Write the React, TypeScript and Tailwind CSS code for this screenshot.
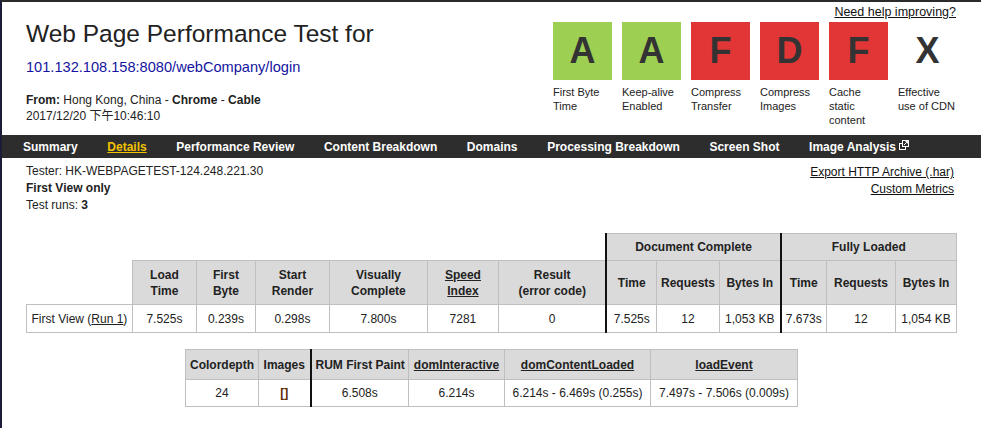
import React from 'react';

const grades = [
  { letter: 'A', bg: 'bg-[#9ccf52]', label: ['First Byte', 'Time'] },
  { letter: 'A', bg: 'bg-[#9ccf52]', label: ['Keep-alive', 'Enabled'] },
  { letter: 'F', bg: 'bg-[#e23636]', label: ['Compress', 'Transfer'] },
  { letter: 'D', bg: 'bg-[#e23636]', label: ['Compress', 'Images'] },
  { letter: 'F', bg: 'bg-[#e23636]', label: ['Cache', 'static', 'content'] },
  { letter: 'X', bg: 'bg-white', label: ['Effective', 'use of CDN'] },
];

const navItems = [
  'Summary',
  'Details',
  'Performance Review',
  'Content Breakdown',
  'Domains',
  'Processing Breakdown',
  'Screen Shot',
];

const ExternalIcon = () => (
  <svg width="10" height="10" viewBox="0 0 10 10" className="ml-[3px] inline-block align-[1px]">
    <rect x="0.5" y="3.5" width="6" height="6" fill="none" stroke="white" strokeWidth="1" />
    <rect x="3.5" y="0.5" width="6" height="6" fill="#2d2d2d" stroke="white" strokeWidth="1" />
    <path d="M5 5 L8.5 1.5 M6.5 1.5 H8.5 V3.5" stroke="white" strokeWidth="1" fill="none" />
  </svg>
);

const th = 'border border-[#bfbfbf] bg-[#dadada] font-bold text-center align-middle px-1';
const td = 'border border-[#bfbfbf] text-center align-middle px-1';
const thick = 'border-l-2 border-l-[#111]';

export default function App() {
  return (
    <div
      className="w-[981px] h-[428px] overflow-hidden bg-white text-[#222] border-t-2 border-t-[#2b2b2b] border-l-2 border-l-[#1c1c3a]"
      style={{ fontFamily: '"Liberation Sans", Arial, "Noto Sans CJK SC", sans-serif' }}
    >
      {/* header */}
      <div className="flex justify-between h-[133px]">
        <div className="pl-[24px] pt-[16px]">
          <h1 className="text-[24.5px] leading-[32px] text-[#222]">Web Page Performance Test for</h1>
          <div className="text-[14.6px] leading-[20px] mt-[7px] text-[#1414a0]">101.132.108.158:8080/webCompany/login</div>
          <div className="text-[12px] leading-[16px] mt-[15px]">
            <b>From:</b> Hong Kong, China - <b>Chrome</b> - <b>Cable</b>
          </div>
          <div className="text-[12px] leading-[16px]">2017/12/20 下午10:46:10</div>
        </div>
        <div className="pr-[25px] flex flex-col items-end">
          <a className="text-[12.5px] leading-[15px] mt-[3px] underline text-[#111]">Need help improving?</a>
          <div className="flex gap-[10px] mt-[2px] mr-[-1px]">
            {grades.map((g, i) => (
              <div key={i} className="w-[59px]">
                <div className={`h-[58px] ${g.bg} flex items-center justify-center text-[36px] font-bold text-[#333]`}>
                  {g.letter}
                </div>
                <div className="text-[11px] leading-[14px] mt-[5px] text-[#222]">
                  {g.label.map((l, j) => (
                    <div key={j}>{l}</div>
                  ))}
                </div>
              </div>
            ))}
          </div>
        </div>
      </div>

      {/* nav */}
      <div className="h-[23px] bg-[#2d2d2d] flex items-center gap-[29.6px] pl-[21px] text-[12px] font-bold text-white">
        {navItems.map((n) => (
          <span key={n} className={n === 'Details' ? 'text-[#f2c200] underline' : ''}>
            {n}
          </span>
        ))}
        <span>
          Image Analysis
          <ExternalIcon />
        </span>
      </div>

      {/* test info */}
      <div className="flex justify-between pl-[24px] pr-[27px] text-[12px]">
        <div className="pt-[5px] leading-[17px]">
          <div>Tester: HK-WEBPAGETEST-124.248.221.30</div>
          <div className="font-bold">First View only</div>
          <div>
            Test runs: <b>3</b>
          </div>
        </div>
        <div className="pt-[6px] leading-[17px] text-right">
          <div className="underline text-[#111]">Export HTTP Archive (.har)</div>
          <div className="underline text-[#111]">Custom Metrics</div>
        </div>
      </div>

      {/* main table */}
      <table className="mx-auto mt-[19px] w-[930px] table-fixed border-collapse text-[12px] leading-[16px]">
        <colgroup>
          {[106, 64, 59, 74, 98, 71, 108, 50, 63, 61, 46, 69, 61].map((w, i) => (
            <col key={i} style={{ width: w }} />
          ))}
        </colgroup>
        <thead>
          <tr className="h-[27px]">
            <th colSpan={7} className="border-0 border-r-2 border-r-[#111]"></th>
            <th colSpan={3} className={`${th} ${thick}`}>Document Complete</th>
            <th colSpan={3} className={`${th} ${thick}`}>Fully Loaded</th>
          </tr>
          <tr className="h-[44px]">
            <th className="border-0 border-b border-b-[#bfbfbf]"></th>
            <th className={th}>Load<br />Time</th>
            <th className={th}>First<br />Byte</th>
            <th className={th}>Start<br />Render</th>
            <th className={th}>Visually<br />Complete</th>
            <th className={th}><span className="underline">Speed<br />Index</span></th>
            <th className={th}>Result<br />(error code)</th>
            <th className={`${th} ${thick}`}>Time</th>
            <th className={th}>Requests</th>
            <th className={th}>Bytes In</th>
            <th className={`${th} ${thick}`}>Time</th>
            <th className={th}>Requests</th>
            <th className={th}>Bytes In</th>
          </tr>
        </thead>
        <tbody>
          <tr className="h-[28px]">
            <td className={`${td} whitespace-nowrap`}>
              First View (<span className="underline">Run 1</span>)
            </td>
            <td className={td}>7.525s</td>
            <td className={td}>0.239s</td>
            <td className={td}>0.298s</td>
            <td className={td}>7.800s</td>
            <td className={td}>7281</td>
            <td className={td}>0</td>
            <td className={`${td} ${thick}`}>7.525s</td>
            <td className={td}>12</td>
            <td className={`${td} whitespace-nowrap`}>1,053 KB</td>
            <td className={`${td} ${thick}`}>7.673s</td>
            <td className={td}>12</td>
            <td className={`${td} whitespace-nowrap`}>1,054 KB</td>
          </tr>
        </tbody>
      </table>

      {/* secondary table */}
      <table className="mx-auto mt-[16px] w-[612px] table-fixed border-collapse text-[12px] leading-[16px]">
        <colgroup>
          {[73, 52, 98, 96, 146, 147].map((w, i) => (
            <col key={i} style={{ width: w }} />
          ))}
        </colgroup>
        <thead>
          <tr className="h-[30px]">
            <th className={`${th} whitespace-nowrap`}>Colordepth</th>
            <th className={th}>Images</th>
            <th className={`${th} ${thick} whitespace-nowrap`}>RUM First Paint</th>
            <th className={th}><span className="underline">domInteractive</span></th>
            <th className={th}><span className="underline">domContentLoaded</span></th>
            <th className={th}><span className="underline">loadEvent</span></th>
          </tr>
        </thead>
        <tbody>
          <tr className="h-[27px]">
            <td className={td}>24</td>
            <td className={`${td} font-bold text-[#5a2a00]`}>[]</td>
            <td className={`${td} ${thick}`}>6.508s</td>
            <td className={td}>6.214s</td>
            <td className={`${td} whitespace-nowrap`}>6.214s - 6.469s (0.255s)</td>
            <td className={`${td} whitespace-nowrap`}>7.497s - 7.506s (0.009s)</td>
          </tr>
        </tbody>
      </table>
    </div>
  );
}
